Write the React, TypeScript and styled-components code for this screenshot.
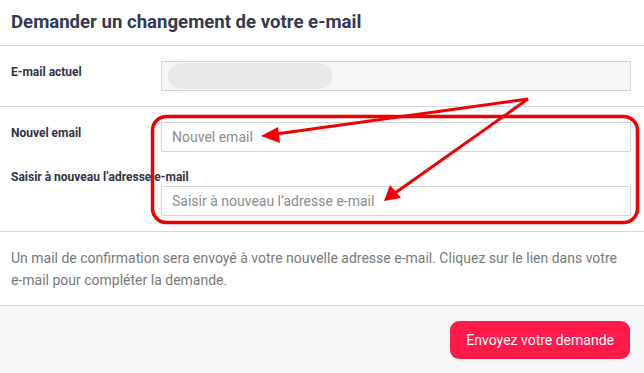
import React from "react";
import styled, { createGlobalStyle } from "styled-components";

const Global = createGlobalStyle`
  html, body { margin: 0; padding: 0; background: #ffffff; }
  body { font-family: Roboto, "Liberation Sans", sans-serif; }
`;

const Page = styled.div`
  position: relative;
  width: 644px;
  height: 373px;
  display: flex;
  flex-direction: column;
  overflow: hidden;
`;

const Header = styled.div`
  height: 46px;
  border-bottom: 1px solid #d8d8d8;
  display: flex;
  align-items: center;
  padding: 0 11px 1px;
  box-sizing: border-box;
`;

const Title = styled.h1`
  margin: 0;
  font-size: 18.6px;
  font-weight: 700;
  color: #353a50;
`;

const Section = styled.div<{ $h: number }>`
  height: ${(p) => p.$h}px;
  box-sizing: border-box;
  border-bottom: 1px solid #d8d8d8;
  display: flex;
  flex-direction: column;
  padding: 15px 13px 0 11px;
`;

const Row = styled.div`
  display: grid;
  grid-template-columns: 150px 1fr;
  align-items: start;
`;

const StackRow = styled.div`
  display: flex;
  flex-direction: column;
  gap: 2px;
  margin-top: 14px;
`;

const Label = styled.label`
  font-size: 12px;
  font-weight: 700;
  color: #2f3349;
  padding-top: 4px;
  white-space: nowrap;
`;

const Field = styled.div<{ $readonly?: boolean }>`
  height: 30px;
  box-sizing: border-box;
  border: 1px solid #d6d6d6;
  background: ${(p) => (p.$readonly ? "#f6f6f6" : "#ffffff")};
  display: flex;
  align-items: center;
  padding: 0 10px;
  font-size: 14px;
  color: #8c8c8c;
`;

const ReadonlyField = styled(Field)`
  padding: 0 6px;
`;

const Pill = styled.div`
  width: 164px;
  height: 26px;
  border-radius: 13px;
  background: #e9e9e9;
`;

const FieldWrap = styled.div<{ $indent?: number }>`
  margin-left: ${(p) => p.$indent ?? 0}px;
`;

const Note = styled.p`
  margin: 0;
  padding: 0 19px 0 11px;
  font-size: 14px;
  line-height: 22px;
  color: #7a7a7a;
`;

const NoteSection = styled.div`
  height: 74px;
  box-sizing: border-box;
  border-bottom: 1px solid #d8d8d8;
  padding-top: 15px;
`;

const Footer = styled.div`
  flex: 1;
  background: #f5f6f8;
  display: flex;
  justify-content: flex-end;
  align-items: flex-start;
  padding: 15px 14px 0 0;
`;

const Button = styled.button`
  height: 38px;
  padding: 0 16px;
  border: none;
  border-radius: 9px;
  background: #ff1a4b;
  color: #ffffff;
  font-family: Roboto, "Liberation Sans", sans-serif;
  font-size: 14px;
  cursor: pointer;
`;

const Overlay = styled.svg`
  position: absolute;
  left: 0;
  top: 0;
  pointer-events: none;
`;

export default function App() {
  return (
    <Page>
      <Global />
      <Header>
        <Title>Demander un changement de votre e-mail</Title>
      </Header>
      <Section $h={61}>
        <Row>
          <Label>E-mail actuel</Label>
          <ReadonlyField $readonly>
            <Pill />
          </ReadonlyField>
        </Row>
      </Section>
      <Section $h={125}>
        <Row>
          <Label>Nouvel email</Label>
          <Field>Nouvel email</Field>
        </Row>
        <StackRow>
          <Label>Saisir à nouveau l’adresse e-mail</Label>
          <FieldWrap $indent={150}>
            <Field>Saisir à nouveau l’adresse e-mail</Field>
          </FieldWrap>
        </StackRow>
      </Section>
      <NoteSection>
        <Note>
          Un mail de confirmation sera envoyé à votre nouvelle adresse e-mail. Cliquez sur le lien dans votre
          e-mail pour compléter la demande.
        </Note>
      </NoteSection>
      <Footer>
        <Button>Envoyez votre demande</Button>
      </Footer>
      <Overlay width="644" height="373" viewBox="0 0 644 373">
        <rect x="152.5" y="116.5" width="485" height="106" rx="14" fill="none" stroke="#f00000" strokeWidth="3.5" />
        <line x1="528" y1="99" x2="276" y2="134" stroke="#f00000" strokeWidth="3" />
        <polygon points="261,136 278,127 280,143" fill="#f00000" />
        <line x1="528" y1="99" x2="395" y2="193" stroke="#f00000" strokeWidth="3" />
        <polygon points="384,201 390,185 401,198" fill="#f00000" />
      </Overlay>
    </Page>
  );
}
